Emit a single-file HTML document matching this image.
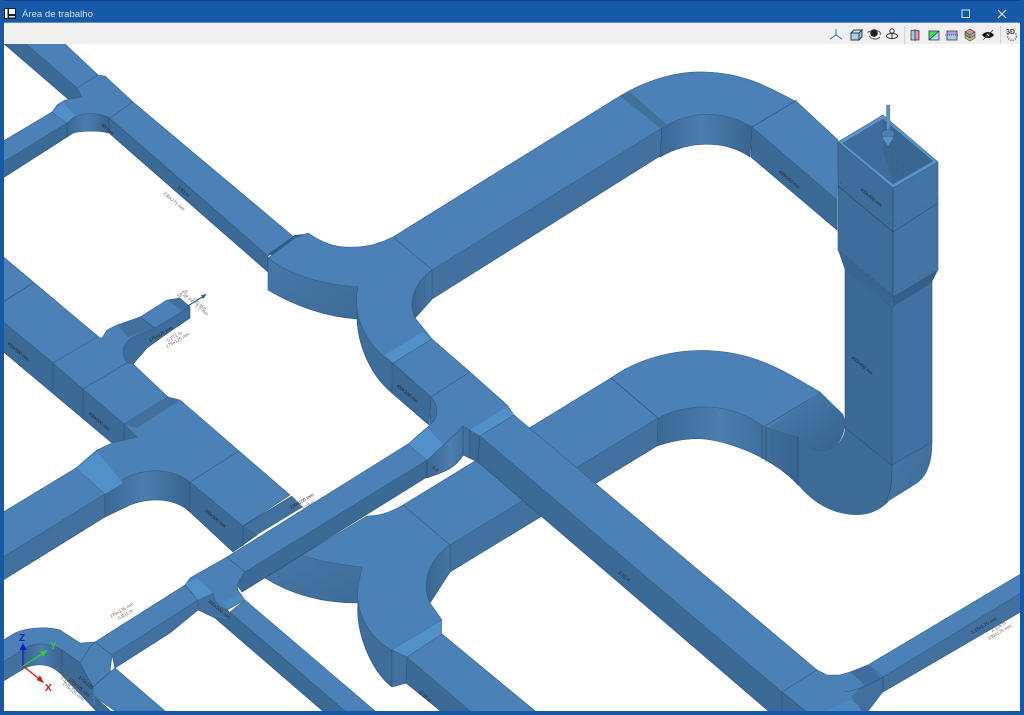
<!DOCTYPE html>
<html><head><meta charset="utf-8"><title>Área de trabalho</title>
<style>
html,body{margin:0;padding:0;width:1024px;height:715px;overflow:hidden;background:#fff;font-family:"Liberation Sans",sans-serif}
svg{position:absolute;left:0;top:0;filter:blur(.35px)}
.t{fill:#4b81b6;stroke:#35608a;stroke-width:.6;stroke-linejoin:round}
.s{fill:#3c6a96;stroke:#2b5077;stroke-width:.6;stroke-linejoin:round}
.m{fill:#42719f;stroke:#2f5680;stroke-width:.6;stroke-linejoin:round}
.l{fill:#5190c8;stroke:none}
.d{fill:#41709c;stroke:none}
.k{fill:#2f5a82;stroke:none}
.e{fill:none;stroke:#2b5077;stroke-width:.7}
.lb{font-family:"Liberation Sans",sans-serif;font-size:4.6px;fill:#222}
.lg{font-family:"Liberation Sans",sans-serif;font-size:4.6px;fill:#666}
.dot{fill:none;stroke:#26486c;stroke-width:1;stroke-dasharray:1 6;opacity:.6}
</style></head><body>
<svg width="1024" height="715" viewBox="0 0 1024 715">
<defs>
<linearGradient id="g1" x1="0" y1="0" x2="1" y2="0"><stop offset="0" stop-color="#3b6895"/><stop offset=".45" stop-color="#4b7dad"/><stop offset="1" stop-color="#38648f"/></linearGradient>
<linearGradient id="g2" x1="0" y1="0" x2="1" y2="0"><stop offset="0" stop-color="#38648f"/><stop offset="1" stop-color="#4676a5"/></linearGradient>
<linearGradient id="g3" x1="0" y1="0" x2="1" y2="1"><stop offset="0" stop-color="#4a7fb3"/><stop offset="1" stop-color="#37628c"/></linearGradient>
<linearGradient id="g4" x1="0" y1="0" x2="1" y2="1"><stop offset="0" stop-color="#4778a8"/><stop offset="1" stop-color="#3d6b97"/></linearGradient>
<clipPath id="vp"><rect x="4" y="44" width="1016" height="667"/></clipPath>
</defs>
<rect width="1024" height="715" fill="#fff"/>
<g clip-path="url(#vp)">

<!-- top-left duct -->
<polygon class="s" points="3,43 25,43 77,88 82,97 68,99"/>
<polygon class="t" points="25,43 64,43 98,75 77,88"/>
<!-- left branch -->
<polygon class="s" points="0,164 67,123 73,133 67,137 0,180"/>
<polygon class="t" points="0,143 52,112 67,123 0,164"/>
<path d="M67,123 C78,112 95,111 109,118 L109,133 C100,131 85,130 73,133 L67,137 Z" fill="url(#g1)" stroke="#2b5077" stroke-width=".6"/>
<path class="t" d="M77,88 L98,75 L105,76 L133,102 L110,118 C95,111 78,112 67,123 L52,112 L57,105 L65,100 L82,97 Z"/>
<polygon class="l" points="52,112 63,103 75,115 67,123"/>
<!-- main duct to tee -->
<polygon class="s" points="109,118 268,256 268,272 109,133"/>
<polygon class="t" points="110,118 133,102 295,238 268,256"/>
<polygon class="k" points="268,254 295,235 305,234 275,256"/>

<!-- upper big duct and elbow -->
<polygon class="m" points="415,318 432,299 660,156 662,128 430,270"/>
<path d="M432,270 C415,282 407,302 415,318 L432,299 Z" fill="url(#g2)" stroke="#2b5077" stroke-width=".6"/>
<path d="M662,128 C690,110 725,110 752,127 L750,157 C725,140 690,140 660,157 Z" fill="url(#g1)" stroke="#2b5077" stroke-width=".6"/>
<polygon class="s" points="752,127 837,200 837,230 751,157"/>
<path class="t" d="M393,237 L620,96 C650,78 680,71 705,72 C745,73 770,88 797,102 L838,140 L837,200 L752,127 C725,110 690,110 662,128 L432,270 Z"/>
<polygon class="d" points="620,96 630,92 666,124 660,128"/>
<line class="e" x1="752" y1="127" x2="797" y2="100"/>

<!-- tee -->
<path d="M268,258 C290,275 320,284 359,287 L357,319 C325,317 293,305 268,290 Z" fill="url(#g4)" stroke="#2f5680" stroke-width=".6"/>
<path class="s" d="M358,287 C352,315 365,345 393,363 L392,393 C370,375 358,345 357,319 Z" style="fill:#3f6d9a"/>
<path class="t" d="M268,258 L295,238 L308,233 C325,245 340,248 353,247 C370,247 380,243 393,237 L432,270 C415,282 407,302 415,318 L432,339 L393,363 C365,345 352,315 358,287 C320,284 290,275 268,258 Z"/>
<polygon class="l" points="385,355 422,332 432,339 393,363"/>
<polygon class="s" points="392,363 431,397 429,425 392,393"/>
<path class="m" d="M431,397 C439,406 439,417 430,425 Z"/>
<polygon class="t" points="393,363 432,339 470,372 431,397"/>
<!-- lower elbow 2 and long straight duct behind long duct -->
<path d="M657,418 C690,402 730,402 763,426 L768,428 L798,437 L798,485 C785,470 760,455 740,448 C710,437 690,435 657,446 Z" fill="url(#g1)" stroke="#2b5077" stroke-width=".6"/>
<polygon class="m" points="450,545 658,418 657,446 450,572"/>
<path class="t" d="M403,505 L611,378 C640,357 680,348 715,351 C760,354 790,375 820,392 L843,415 L845,428 L798,437 L768,428 L763,426 C730,402 690,402 658,418 L450,545 Z"/>
<line class="e" x1="611" y1="378" x2="658" y2="418"/>
<line class="e" x1="820" y1="393" x2="765" y2="426"/>
<line class="e" x1="826" y1="397" x2="768" y2="429"/>
<line class="e" x1="762" y1="426" x2="762" y2="459"/>
<line class="e" x1="766" y1="428" x2="766" y2="462"/>
<!-- vertical big elbow -->
<path d="M798,437 L798,485 C815,505 835,515 857,515 C870,515 880,510 888,502 C893,490 892,480 892,465 L845,428 C844,440 835,450 822,450 C812,450 805,445 798,437 Z" fill="#3d6b98" stroke="none"/>
<path d="M768,428 L798,437 C805,445 812,451 822,451 C836,451 845,438 845,420 L843,414 L820,392 Z" fill="url(#g3)"/>
<path d="M798,437 C805,445 812,451 822,451 C836,451 845,438 845,420" fill="none" stroke="#35608a" stroke-width=".5"/>
<line class="e" x1="798" y1="437" x2="798" y2="485"/>
<path d="M892,465 L932,442 C932,460 928,475 917,483 L885,503 C892,490 892,480 892,465 Z" fill="url(#g4)" stroke="#2f5680" stroke-width=".5"/>
<!-- vertical duct -->
<polygon class="s" points="845,268 892,307 892,465 845,428"/>
<polygon class="m" points="892,307 932,282 932,442 892,465"/>
<path class="e" d="M892,465 C892,480 892,490 885,503"/>
<!-- box -->
<polygon class="m" points="838,142 893,188 893,232 838,186" style="fill:#3f6d9b"/>
<polygon class="m" points="838,186 893,232 893,297 838,250" style="fill:#3f6d9b"/>
<polygon points="838,250 845,270 892,307 893,295" fill="#396592"/>
<polygon class="m" points="893,188 938,162 938,270 893,297" style="fill:#4475a5"/>
<polygon points="893,297 938,270 932,282 892,307" fill="#355f88"/>
<line class="e" x1="838" y1="186" x2="893" y2="232"/>
<line class="e" x1="893" y1="232" x2="938" y2="203"/>
<line class="e" x1="893" y1="188" x2="893" y2="307"/>
<polygon points="838,142 883,115 938,162 893,188" fill="#5a94ca" stroke="#35608a" stroke-width=".6"/>
<polygon points="843,143 883,119 933,161 893,184" fill="#3f6d9b" stroke="#35608a" stroke-width=".5"/>
<polygon points="883,119 933,161 893,184 883,150" fill="#3a6792"/>
<line class="dot" x1="840" y1="183" x2="892" y2="226"/>
<line class="dot" x1="895" y1="226" x2="938" y2="198"/>
<line class="dot" x1="841" y1="252" x2="892" y2="294"/>
<line class="dot" x1="895" y1="292" x2="934" y2="270"/>
<line class="dot" x1="880" y1="158" x2="905" y2="176"/>
<line class="dot" x1="886" y1="154" x2="912" y2="172"/>
<rect x="886.5" y="105" width="3.4" height="26" fill="#5b93c6" stroke="#3c6a96" stroke-width=".4"/>
<ellipse cx="888" cy="134" rx="6.5" ry="4.5" fill="#4a80b4" stroke="#2f5680" stroke-width=".6"/>
<polygon points="882,137 894,137 888,146" fill="#5a94ca" stroke="#3c6a96" stroke-width=".4"/>

<!-- left main duct -->
<polygon class="s" points="0,319 53,363 83,389 124,424 137,437 112,443 0,349"/>
<line class="e" x1="53" y1="363" x2="53" y2="390"/>
<line class="e" x1="83" y1="389" x2="83" y2="416"/>
<line class="e" x1="124" y1="424" x2="124" y2="441"/>
<polygon class="t" points="0,254 100,338 127,363 83,389 53,363 0,319"/>
<line class="e" x1="33" y1="283" x2="0" y2="304"/>
<!-- small branch -->
<path class="s" d="M155,328 L190,307 L190,318 L165,335 L147,348 L133,364 L127,363 C120,352 122,343 135,336 Z" style="fill:#3f6d9b"/>
<path class="t" d="M102,338 L107,330 L117,325 L140,317 L167,300 L180,298 L190,307 L155,328 L135,336 C122,343 120,352 127,363 L83,389 L53,363 L97,337 Z"/>
<polygon class="d" points="117,325 140,317 155,328 128,337"/>
<polygon points="167,300 180,298 190,307 182,311" fill="#41709c"/>
<line class="e" x1="140" y1="317" x2="155" y2="328"/>
<polygon class="t" points="127,363 133,364 168,397 124,424 83,389"/>
<!-- second tee -->
<polygon class="m" points="0,559 105,494 105,517 0,582"/>
<polygon class="t" points="0,514 76,468 105,494 0,559"/>
<path d="M105,494 C125,470 165,462 190,482 L190,512 C175,498 150,497 130,505 L105,517 Z" fill="url(#g1)" stroke="#2b5077" stroke-width=".6"/>
<polygon class="s" points="190,482 243,526 257,535 243,545 233,552 190,512"/>
<line class="e" x1="243" y1="526" x2="243" y2="546"/>
<path class="t" d="M112,443 L137,437 L124,424 L168,397 L180,400 L239,451 L190,482 C165,462 125,470 105,494 L76,468 L97,450 Z"/>
<polygon class="d" points="168,397 180,400 137,428 124,424"/>
<polygon class="l" points="76,468 97,452 123,483 105,494"/>
<polygon class="t" points="190,482 239,451 290,495 243,526"/>
<polygon class="d" points="243,526 292,496 303,507 257,535"/>
<line class="e" x1="243" y1="526" x2="292" y2="496"/>

<!-- lower tee -->
<path d="M265,578 L302,555 C320,562 345,565 362,567 L358,603 C335,603 300,600 265,578 Z" fill="url(#g4)" stroke="#2f5680" stroke-width=".6"/>
<path class="s" d="M358,587 C355,615 372,640 392,650 L392,687 C370,670 355,630 358,603 Z" style="fill:#3f6d9a"/>
<path d="M450,545 C425,562 422,588 430,603 L450,572 Z" fill="url(#g2)" stroke="#2b5077" stroke-width=".6"/>
<path class="t" d="M302,555 C320,562 345,565 362,567 L358,587 C355,615 372,640 392,650 L442,620 L430,603 C422,588 425,562 450,545 L403,505 C390,513 378,516 367,516 Z"/>
<polygon class="l" points="392,650 442,620 442,634 407,657"/>
<polygon class="m" points="392,650 407,657 407,683 392,687"/>
<polygon class="s" points="407,657 470,711 443,713 406,683"/>
<polygon class="t" points="407,657 442,634 540,715 470,711"/>

<!-- lower left branch & junction -->
<polygon class="s" points="229,612 345,711 325,713 215,618 213,593"/>
<polygon class="t" points="230,612 245,600 375,711 345,711"/>
<polygon class="m" points="112,655 198,600 198,610 170,633 115,668"/>
<polygon class="t" points="95,642 185,585 198,600 112,655"/>
<path class="m" d="M198,600 L213,593 C214,602 220,608 229,612 L229,620 L215,618 L198,610 Z"/>
<!-- crossing duct -->
<polygon class="s" points="427,460 245,572 237,585 242,592 427,477"/>
<polygon class="t" points="408,444 227,557 245,572 427,460"/>
<path class="t" d="M227,557 L190,578 L185,585 L198,600 L213,593 C214,602 220,608 227,610 L245,600 L240,593 C235,588 238,580 245,572 Z"/>
<polygon class="l" points="185,584 197,578 213,593 198,600"/>
<polygon points="227,608 222,602 240,595 245,600" fill="#4d8ac0"/>

<!-- centre junction -->
<path d="M427,460 C440,448 455,435 463,426 L470,430 L480,436 L478,462 L463,455 C455,470 440,473 427,478 Z" fill="url(#g1)" stroke="#2b5077" stroke-width=".6"/>
<line class="e" x1="463" y1="426" x2="463" y2="456"/>
<line class="e" x1="470" y1="430" x2="470" y2="458"/>
<path class="t" d="M431,397 L470,372 L507,405 L514,415 L480,436 L470,430 L463,426 C455,435 440,448 427,460 L408,444 L430,425 C439,417 439,406 431,397 Z"/>
<polygon class="l" points="470,430 507,407 514,415 480,436"/>
<polygon class="l" points="408,444 428,428 443,445 427,460"/>
<!-- long duct -->
<polygon class="s" points="480,436 782,692 782,720 773,715 478,462"/>
<polygon class="t" points="480,436 514,415 817,670 782,692"/>
<!-- bottom-right junction -->
<polygon class="m" points="883,677 1024,591 1024,610 883,692"/>
<polygon class="t" points="868,665 1024,572 1024,591 883,677"/>
<polygon points="782,692 817,670 827,675 840,675 850,672 868,665 883,677 883,692 867,713 790,713" fill="#4b81b6"/>
<polygon points="862,686 883,677 883,692 867,713 858,713 852,696" fill="#41709d"/>
<path d="M782,692 L817,670 L827,675 L840,675 L850,672 L868,665 L883,677" fill="none" stroke="#35608a" stroke-width=".6"/>
<polygon points="850,672 868,665 881,678 865,685" fill="#3f6d9b"/>
<path d="M844,692 C860,690 875,682 883,677" fill="none" stroke="#2f5680" stroke-width=".6"/>
<line class="e" x1="883" y1="677" x2="883" y2="692"/>
<polygon points="823,712 850,700 858,705 862,712" fill="#4d89c0"/>
<polygon class="s" points="782,692 808,713 782,713"/>

<!-- bottom-left elbow -->
<polygon class="m" points="0,683 25,668 25,648 0,664"/>
<path class="t" d="M0,642 L15,633 C25,628 45,626 60,630 L80,643 L95,642 L90,647 L80,663 L62,650 C50,643 35,642 25,648 L0,664 Z"/>
<path d="M25,648 C35,642 50,643 62,650 L62,675 C50,663 37,663 25,668 Z" fill="url(#g1)" stroke="#2f5680" stroke-width=".5"/>
<polygon class="s" points="62,650 80,663 93,687 95,697 115,715 100,715 62,675"/>
<polygon class="t" points="110,672 115,668 165,711 115,711 95,697 93,687"/>
<path d="M90,647 L95,642 L112,655 L110,672 L93,687 L80,663 Z" fill="#4a80b4" stroke="#2f5680" stroke-width=".6"/>

<!-- labels -->
<g>
<text class="lb" transform="translate(177,188) rotate(40)">1.83 m</text>
<text class="lg" transform="translate(163,194) rotate(40)">230x271 mm</text>
<text class="lb" transform="translate(99,124) rotate(40)">- 60 mm</text>
<text class="lb" transform="translate(778,172) rotate(40)">450x350 mm</text>
<text class="lb" transform="translate(851,358) rotate(40)">450x450 mm</text>
<text class="lb" transform="translate(860,190) rotate(40)">450x450 mm</text>
<text class="lb" transform="translate(7,344) rotate(40)">450x500 mm</text>
<text class="lb" transform="translate(88,414) rotate(40)">450x500 mm</text>
<text class="lb" transform="translate(204,511) rotate(40)">300x300 mm</text>
<text class="lb" transform="translate(396,386) rotate(40)">450x300 mm</text>
<text class="lb" transform="translate(618,573) rotate(40)">3.12 m</text>
<text class="lb" transform="translate(208,602) rotate(40)">300x300 mm</text>
<text class="lb" transform="translate(432,468) rotate(40)">0.4</text>
<text class="lb" transform="translate(419,693) rotate(40)">0.18 m</text>
<text class="lb" transform="translate(972,634) rotate(-30)">1.15x1.75 mm</text>
<text class="lg" transform="translate(992,632) rotate(-30)">2.126 m</text>
<text class="lg" transform="translate(989,640) rotate(-30)">130x175 mm</text>
<text class="lg" transform="translate(111,618) rotate(-30)">175x135 mm</text>
<text class="lg" transform="translate(119,620) rotate(-30)">0.821 m</text>
<text class="lb" transform="translate(150,342) rotate(-30)">175x125 mm</text>
<text class="lg" transform="translate(168,342) rotate(-30)">0.271 m</text>
<text class="lg" transform="translate(167,348) rotate(-30)">175x125 mm</text>
<text class="lb" transform="translate(291,509) rotate(-30)">230x100 mm</text>
<text class="lg" transform="translate(303,510) rotate(-30)">1.18 m</text>
<text class="lg" transform="translate(180,293) rotate(40)">1.28 l/s</text>
<text class="lg" transform="translate(178,298) rotate(-30)">32.78</text>
<text class="lg" transform="translate(192,300) rotate(40)">125 mm</text>
<text class="lg" transform="translate(195,306) rotate(40)">1.5 mm</text>
<text class="lg" transform="translate(58,672) rotate(40)">175x125 mm</text>
<text class="lg" transform="translate(60,678) rotate(40)">0.32 m 0.44</text>
<text class="lg" transform="translate(62,684) rotate(40)">175x125 mm</text>
<text class="lb" transform="translate(68,680) rotate(40)">175x125 mm</text>
<text class="lg" transform="translate(70,672) rotate(40)">0.11 m 1.5</text>
<text class="lb" transform="translate(78,678) rotate(40)">175x125</text>
</g>
<line x1="186" y1="307" x2="204" y2="296" stroke="#35608a" stroke-width="1.2"/>
<polygon points="207,294 201,295 203,299" fill="#35608a"/>
<line x1="94" y1="690" x2="94" y2="705" stroke="#4a80b5" stroke-width="1"/>

<!-- axes -->
<line x1="23" y1="666" x2="23" y2="649" stroke="#0a1fc0" stroke-width="1.3"/>
<polygon points="23,643 19.5,650 26.5,650" fill="#0a1fc0"/>
<text x="19" y="641" font-family="Liberation Sans" font-size="10" font-weight="bold" fill="#0a1fc0">Z</text>
<line x1="23" y1="666" x2="42" y2="654" stroke="#33cc33" stroke-width="1.3"/>
<polygon points="48,650 40,651.5 43,656.5" fill="#33cc33"/>
<text x="50" y="649" font-family="Liberation Sans" font-size="10" font-weight="bold" fill="#33cc33">Y</text>
<line x1="23" y1="666" x2="38" y2="678" stroke="#e01010" stroke-width="1.3"/>
<polygon points="44,683 36.5,680 40,675.5" fill="#e01010"/>
<text x="45" y="691" font-family="Liberation Sans" font-size="10" font-weight="bold" fill="#e01010">X</text>
</g>

<!-- window frame -->
<rect x="0" y="0" width="1024" height="23" fill="#1559a8"/>
<rect x="0" y="0" width="1024" height="1" fill="#0f3f8c"/>
<rect x="0" y="22" width="1024" height="1" fill="#5b8fc9"/>
<rect x="0" y="0" width="4" height="715" fill="#1559a8"/>
<rect x="1020" y="0" width="4" height="715" fill="#1559a8"/>
<rect x="0" y="711" width="1024" height="4" fill="#1559a8"/>
<rect x="4" y="23" width="1016" height="21" fill="#f0f0f0"/>

<!-- title icon -->
<rect x="4" y="8" width="12" height="11" fill="#10202f"/>
<rect x="5" y="9" width="2.5" height="9" fill="#fff"/>
<rect x="9" y="9" width="6" height="5" fill="#fff"/>
<rect x="9" y="16" width="6" height="1.5" fill="#dfe8f2"/>
<text x="22" y="17" font-family="Liberation Sans" font-size="9.6" fill="#cfe0f2">Área de trabalho</text>
<!-- window buttons -->
<rect x="962" y="10" width="7.5" height="7.5" fill="none" stroke="#dbe7f4" stroke-width="1"/>
<path d="M998,10 L1006,18 M1006,10 L998,18" stroke="#eef4fb" stroke-width="1.1" fill="none"/>

<!-- toolbar icons -->
<g>
<path d="M836,35 V29 M836,35 L830,39 M836,35 L842,39" stroke="#3f6f9f" stroke-width="1" fill="none"/>
<polygon points="851,33 859,33 859,40 851,40" fill="#a8cfe6" stroke="#2a3a4c" stroke-width=".9"/>
<polygon points="851,33 854,30 862,30 859,33" fill="#d6e9f4" stroke="#2a3a4c" stroke-width=".9"/>
<polygon points="859,33 862,30 862,37 859,40" fill="#8fbcd8" stroke="#2a3a4c" stroke-width=".9"/>
<circle cx="874" cy="33" r="3.8" fill="#222"/>
<path d="M868,33 C868,31 871,31 871,31 M877,31 C880,31 881,33 880,35 M869,36 C872,40 877,40 880,37" stroke="#555" stroke-width="1" fill="none"/>
<circle cx="892" cy="31" r="2.2" fill="none" stroke="#333" stroke-width="1"/>
<line x1="892" y1="33" x2="892" y2="39" stroke="#333" stroke-width="1"/>
<ellipse cx="892" cy="36" rx="5.5" ry="2.6" fill="none" stroke="#333" stroke-width="1"/>
<rect x="904" y="26" width="1" height="18" fill="#d2d2d2"/>
<rect x="911" y="31" width="4" height="9" fill="#9ccbe6"/>
<rect x="915" y="31" width="4" height="9" fill="#ff8a9a"/>
<path d="M911,30.5 H919 V40 H911 Z M915,29 V41" stroke="#2a3a4c" stroke-width=".8" fill="none"/>
<polygon points="929,31 939,31 929,40" fill="#3fe05a"/>
<polygon points="939,31 939,40 929,40" fill="#b5d6ec"/>
<path d="M929,31 H939 V40 H929 Z M939,31 L929,40" stroke="#2a3a4c" stroke-width=".8" fill="none"/>
<rect x="947" y="31" width="10" height="4" fill="#b09be8"/>
<rect x="947" y="35" width="10" height="5" fill="#a8cfe6"/>
<path d="M947,31 H957 V40 H947 Z" stroke="#2a3a4c" stroke-width=".8" fill="none"/>
<line x1="945" y1="35" x2="959" y2="35" stroke="#2a3a4c" stroke-width=".7" stroke-dasharray="1 1"/>
<polygon points="970,29 975,32 970,35 965,32" fill="#e88a8a" stroke="#444" stroke-width=".6"/>
<polygon points="965,32 970,35 970,38 965,35" fill="#6fb26f" stroke="#444" stroke-width=".6"/>
<polygon points="975,32 970,35 970,38 975,35" fill="#8fb8d8" stroke="#444" stroke-width=".6"/>
<polygon points="965,35 970,38 975,35 975,38 970,41 965,38" fill="#d8b56a" stroke="#444" stroke-width=".6"/>
<path d="M982,35 C985,31 991,31 994,35 C991,39 985,39 982,35 Z" fill="#111"/>
<circle cx="988" cy="35" r="1.4" fill="#ddd"/>
<line x1="983" y1="40" x2="993" y2="30" stroke="#444" stroke-width=".8"/>
<rect x="1000" y="26" width="1" height="18" fill="#d2d2d2"/>
<circle cx="1012" cy="36" r="4.5" fill="none" stroke="#888" stroke-width="1.6" stroke-dasharray="1.5 1"/>
<text x="1006" y="34" font-family="Liberation Sans" font-size="7" font-weight="bold" fill="#555">3D</text>
</g>
</svg>
</body></html>
